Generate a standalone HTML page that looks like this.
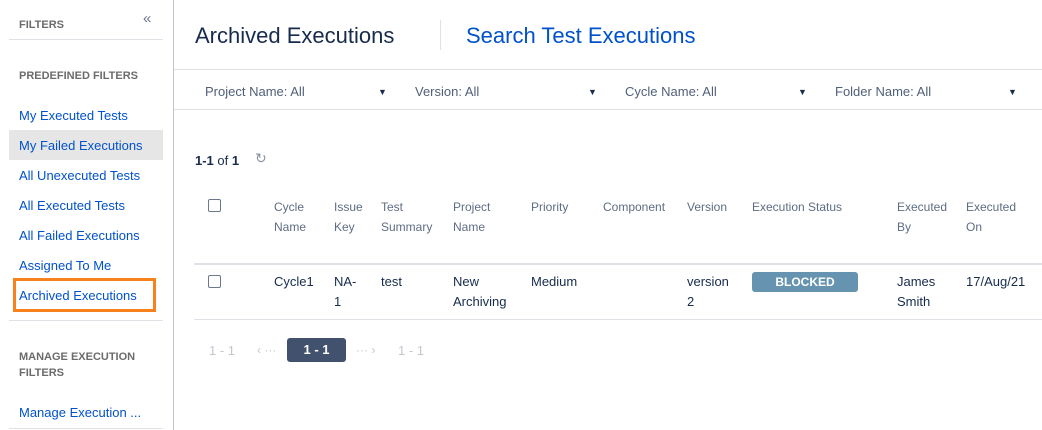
<!DOCTYPE html>
<html><head><meta charset="utf-8"><style>
*{margin:0;padding:0;box-sizing:border-box}
body{width:1042px;height:430px;overflow:hidden;background:#fff;font-family:"Liberation Sans",sans-serif;position:relative;color:#172b4d}
.a{position:absolute;white-space:nowrap}
.h{font-size:11px;font-weight:bold;color:#6b6b6b}
.l{font-size:13px;color:#0052cc}
.ln{position:absolute;background:#dfe1e6;height:1px}
.th{font-size:12px;color:#5e6c84;line-height:20px;position:absolute}
.td{font-size:13px;color:#172b4d;line-height:20px;position:absolute}
.cb{position:absolute;width:13px;height:13px;border:1px solid #6b778c;border-radius:2px}
.f{font-size:13px;color:#505f79}
.car{font-size:9px;color:#172b4d}
</style></head><body>
<div style="position:absolute;left:173px;top:0;width:1px;height:430px;background:#c1c7d0"></div>
<div class="a h" style="left:19px;top:19px">FILTERS</div>
<div class="a" style="left:143px;top:10px;font-size:15px;color:#6b778c">«</div>
<div class="ln" style="left:9px;top:39px;width:154px"></div>
<div class="a h" style="left:19px;top:70px">PREDEFINED FILTERS</div>
<div class="a l" style="left:19px;top:108px">My Executed Tests</div>
<div style="position:absolute;left:9px;top:130px;width:154px;height:30px;background:#e6e6e6"></div>
<div class="a l" style="left:19px;top:138px">My Failed Executions</div>
<div class="a l" style="left:19px;top:168px">All Unexecuted Tests</div>
<div class="a l" style="left:19px;top:198px">All Executed Tests</div>
<div class="a l" style="left:19px;top:228px">All Failed Executions</div>
<div class="a l" style="left:19px;top:258px">Assigned To Me</div>
<div style="position:absolute;left:13px;top:278px;width:143px;height:34px;border:3px solid #f7821b"></div>
<div class="a l" style="left:19px;top:288px">Archived Executions</div>
<div class="ln" style="left:9px;top:320px;width:154px"></div>
<div class="a h" style="left:19px;top:349px;line-height:16px">MANAGE EXECUTION<br>FILTERS</div>
<div class="a l" style="left:19px;top:405px">Manage Execution ...</div>
<div class="ln" style="left:9px;top:428px;width:154px"></div>

<div class="a" style="left:195px;top:23px;font-size:22px;color:#172b4d">Archived Executions</div>
<div style="position:absolute;left:440px;top:20px;width:1px;height:30px;background:#dfe1e6"></div>
<div class="a" style="left:466px;top:23px;font-size:22px;color:#0052cc">Search Test Executions</div>
<div class="ln" style="left:174px;top:69px;width:868px"></div>
<div class="a f" style="left:205px;top:84px">Project Name: All</div><div class="a car" style="left:378px;top:87px">▼</div>
<div class="a f" style="left:415px;top:84px">Version: All</div><div class="a car" style="left:588px;top:87px">▼</div>
<div class="a f" style="left:625px;top:84px">Cycle Name: All</div><div class="a car" style="left:798px;top:87px">▼</div>
<div class="a f" style="left:835px;top:84px">Folder Name: All</div><div class="a car" style="left:1008px;top:87px">▼</div>
<div class="ln" style="left:174px;top:109px;width:868px"></div>

<div class="a" style="left:195px;top:153px;font-size:13px"><b>1-1</b> of <b>1</b></div>
<div class="a" style="left:255px;top:150px;font-size:14px;color:#8993a4">↻</div>

<div class="cb" style="left:208px;top:199px"></div>
<div class="th" style="left:274px;top:197px">Cycle<br>Name</div>
<div class="th" style="left:334px;top:197px">Issue<br>Key</div>
<div class="th" style="left:381px;top:197px">Test<br>Summary</div>
<div class="th" style="left:453px;top:197px">Project<br>Name</div>
<div class="th" style="left:531px;top:197px">Priority</div>
<div class="th" style="left:603px;top:197px">Component</div>
<div class="th" style="left:687px;top:197px">Version</div>
<div class="th" style="left:752px;top:197px">Execution Status</div>
<div class="th" style="left:897px;top:197px">Executed<br>By</div>
<div class="th" style="left:966px;top:197px">Executed<br>On</div>
<div style="position:absolute;left:194px;top:263px;width:848px;height:2px;background:#dfe1e6"></div>

<div class="cb" style="left:208px;top:275px"></div>
<div class="td" style="left:274px;top:272px">Cycle1</div>
<div class="td" style="left:334px;top:272px">NA-<br>1</div>
<div class="td" style="left:381px;top:272px">test</div>
<div class="td" style="left:453px;top:272px">New<br>Archiving</div>
<div class="td" style="left:531px;top:272px">Medium</div>
<div class="td" style="left:687px;top:272px">version<br>2</div>
<div style="position:absolute;left:752px;top:272px;width:106px;height:20px;background:#6693b0;border-radius:3px;color:#fff;font-size:12px;font-weight:bold;text-align:center;line-height:20px">BLOCKED</div>
<div class="td" style="left:897px;top:272px">James<br>Smith</div>
<div class="td" style="left:966px;top:272px">17/Aug/21</div>
<div class="ln" style="left:194px;top:319px;width:848px"></div>

<div class="a" style="left:209px;top:343px;font-size:13px;color:#c1c7d0">1 - 1</div>
<div class="a" style="left:257px;top:343px;font-size:12px;color:#c1c7d0">‹ ···</div>
<div style="position:absolute;left:287px;top:338px;width:59px;height:24px;background:#42526e;border-radius:3px;color:#fff;font-size:13px;text-align:center;line-height:24px;font-weight:bold">1 - 1</div>
<div class="a" style="left:356px;top:343px;font-size:12px;color:#c1c7d0">··· ›</div>
<div class="a" style="left:398px;top:343px;font-size:13px;color:#c1c7d0">1 - 1</div>
</body></html>
